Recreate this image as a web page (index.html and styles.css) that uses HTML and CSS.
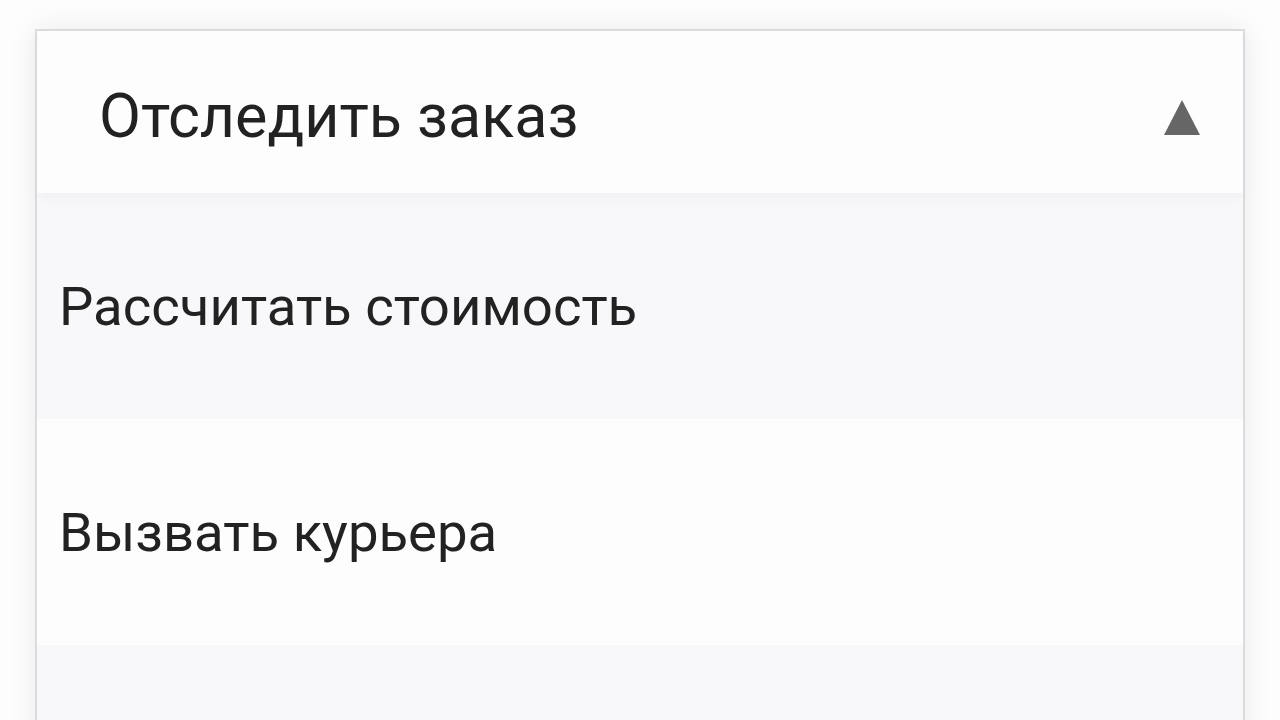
FILE: index.html
```html
<!DOCTYPE html>
<html lang="ru">
<head>
    <meta charset="UTF-8">
    <meta name="viewport" content="width=device-width, initial-scale=1.0">
    <title>Меню</title>
    <link rel="stylesheet" href="styles.css">
</head>
<body>
    <div class="menu">
        <div class="menu-head">
            <span class="menu-title">Отследить заказ</span>
            <svg class="menu-arrow" viewBox="0 0 36 35" width="36" height="35">
                <polygon points="18,0 36,35 0,35" fill="#666666"/>
            </svg>
        </div>
        <div class="menu-item shaded">Рассчитать стоимость</div>
        <div class="menu-item">Вызвать курьера</div>
        <div class="menu-item shaded last"></div>
    </div>
</body>
</html>
```

FILE: styles.css
```css
body {
    margin: 0;
    height: 720px;
    overflow: hidden;
    background-color: #fdfdfe;
    font-family: Roboto, 'Noto Sans', sans-serif;
    color: #222222;
}

.menu {
    margin: 29px 35px 0 35px;
    border: 2px solid #dcdbde;
    border-bottom: none;
    background-color: #fdfdfe;
    box-shadow: 0 0 28px rgba(0, 0, 0, 0.08);
}

.menu-head {
    height: 162px;
    display: flex;
    align-items: center;
    justify-content: space-between;
    padding: 0 43px 0 62px;
    box-shadow: 0 6px 14px rgba(0, 0, 0, 0.03);
    position: relative;
}

.menu-title {
    font-size: 61px;
    margin-top: 8px;
}

.menu-arrow {
    display: block;
    margin-top: 10px;
}

.menu-item {
    height: 226px;
    display: flex;
    align-items: center;
    padding-left: 22px;
    font-size: 54.5px;
    background-color: #fdfdfe;
}

.menu-item.shaded {
    background-color: #f8f7fa;
}

.menu-item.last {
    height: 120px;
}
```
